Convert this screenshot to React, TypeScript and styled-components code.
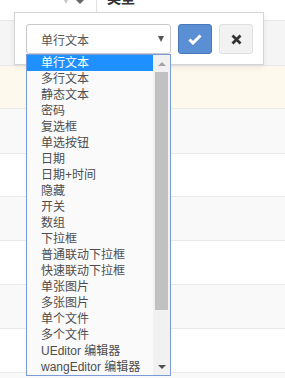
import React from 'react'
import styled, { createGlobalStyle } from 'styled-components'

const GlobalStyle = createGlobalStyle`
  html, body {
    margin: 0;
    padding: 0;
    background: #fff;
    overflow: hidden;
  }
  body {
    font-family: "Liberation Sans", "Noto Sans CJK SC", sans-serif;
  }
`

const Page = styled.div`
  position: relative;
  width: 285px;
  height: 378px;
  overflow: hidden;
`

const HeaderRow = styled.div`
  display: flex;
  align-items: flex-start;
  height: 20px;
  background: #fff;
`

const SortCell = styled.div`
  width: 97px;
  display: flex;
  justify-content: flex-end;
  padding-right: 11px;
  box-sizing: border-box;
  border-right: 1px solid #e2e2e2;
  height: 12px;
`

const HeaderTitle = styled.div`
  margin: -10px 0 0 10px;
  font-size: 14px;
  line-height: 16px;
  font-weight: bold;
  color: #333;
`

const Row = styled.div<{ $h: number; $bg: string }>`
  height: ${(p) => p.$h}px;
  background: ${(p) => p.$bg};
  border-top: 1px solid #e9e9e9;
  box-sizing: border-box;
`

const Popover = styled.div`
  position: absolute;
  left: 14px;
  top: 12px;
  display: flex;
  gap: 7px;
  padding: 11px 10px 10px 11px;
  background: #fff;
  border: 1px solid #d4d4d4;
  box-shadow: 0 2px 6px rgba(0, 0, 0, 0.08);
`

const SelectBox = styled.div`
  width: 145px;
  height: 30px;
  box-sizing: border-box;
  border: 1px solid #c9c9c9;
  border-radius: 3px;
  display: flex;
  align-items: center;
  justify-content: space-between;
  padding: 0 6px 0 14px;
  font-size: 12px;
  color: #555;
  background: #fff;
`

const Caret = styled.span`
  width: 0;
  height: 0;
  border-left: 3.5px solid transparent;
  border-right: 3.5px solid transparent;
  border-top: 6px solid #555;
`

const IconButton = styled.div<{ $primary?: boolean }>`
  width: 34px;
  height: 30px;
  box-sizing: border-box;
  border-radius: 3px;
  display: flex;
  align-items: center;
  justify-content: center;
  background: ${(p) => (p.$primary ? '#5a8fd3' : '#f2f2f2')};
  border: 1px solid ${(p) => (p.$primary ? '#4979bd' : '#e0e0e0')};
`

const Listbox = styled.div`
  position: absolute;
  left: 26px;
  top: 54px;
  width: 145px;
  height: 322px;
  box-sizing: border-box;
  border: 1px solid #7a9ad8;
  background: #fafafa;
  display: flex;
  overflow: hidden;
`

const Options = styled.div`
  flex: 1;
  display: flex;
  flex-direction: column;
`

const Option = styled.div<{ $active?: boolean }>`
  height: 16px;
  line-height: 16px;
  padding-left: 14px;
  font-size: 12px;
  white-space: nowrap;
  color: ${(p) => (p.$active ? '#fff' : '#4d4d4d')};
  background: ${(p) => (p.$active ? '#1e90ff' : 'transparent')};
`

const Scrollbar = styled.div`
  width: 17px;
  background: #f1f1f1;
  display: flex;
  flex-direction: column;
  align-items: center;
`

const ArrowUp = styled.div`
  height: 17px;
  display: flex;
  align-items: center;
  justify-content: center;
  &::after {
    content: '';
    border-left: 4px solid transparent;
    border-right: 4px solid transparent;
    border-bottom: 4px solid #a3a3a3;
  }
`

const ArrowDown = styled(ArrowUp)`
  margin-top: auto;
  &::after {
    border-bottom: none;
    border-top: 4px solid #505050;
  }
`

const Thumb = styled.div`
  width: 13px;
  height: 238px;
  background: #c1c1c1;
`

const options = [
  '单行文本',
  '多行文本',
  '静态文本',
  '密码',
  '复选框',
  '单选按钮',
  '日期',
  '日期+时间',
  '隐藏',
  '开关',
  '数组',
  '下拉框',
  '普通联动下拉框',
  '快速联动下拉框',
  '单张图片',
  '多张图片',
  '单个文件',
  '多个文件',
  'UEditor 编辑器',
  'wangEditor 编辑器',
]

const rows: [number, string][] = [
  [45, '#f5f5f5'],
  [43, '#fdf9ec'],
  [45, '#f9f9f9'],
  [43, '#fff'],
  [44, '#f9f9f9'],
  [44, '#fff'],
  [44, '#f9f9f9'],
  [44, '#fff'],
  [44, '#f9f9f9'],
]

export default function App() {
  return (
    <Page>
      <GlobalStyle />
      <HeaderRow>
        <SortCell>
          <svg width="22" height="5" viewBox="0 0 22 5">
            <path d="M1 0 L5 0 L3 4 Z" fill="#c8c8c8" />
            <path d="M13 0 L21 0 L17 4 Z" fill="#666" />
          </svg>
        </SortCell>
        <HeaderTitle>类型</HeaderTitle>
      </HeaderRow>
      {rows.map(([h, bg], i) => (
        <Row key={i} $h={h} $bg={bg} />
      ))}

      <Popover>
        <SelectBox>
          <span>单行文本</span>
          <Caret />
        </SelectBox>
        <IconButton $primary>
          <svg width="14" height="12" viewBox="0 0 14 12">
            <path
              d="M1.5 6.5 L5 10 L12.5 2.5"
              fill="none"
              stroke="#fff"
              strokeWidth="3"
              strokeLinejoin="miter"
            />
          </svg>
        </IconButton>
        <IconButton>
          <svg width="11" height="11" viewBox="0 0 11 11">
            <path
              d="M1.5 1.5 L9.5 9.5 M9.5 1.5 L1.5 9.5"
              stroke="#333"
              strokeWidth="2.8"
            />
          </svg>
        </IconButton>
      </Popover>

      <Listbox>
        <Options>
          {options.map((o, i) => (
            <Option key={o} $active={i === 0}>
              {o}
            </Option>
          ))}
        </Options>
        <Scrollbar>
          <ArrowUp />
          <Thumb />
          <ArrowDown />
        </Scrollbar>
      </Listbox>
    </Page>
  )
}
